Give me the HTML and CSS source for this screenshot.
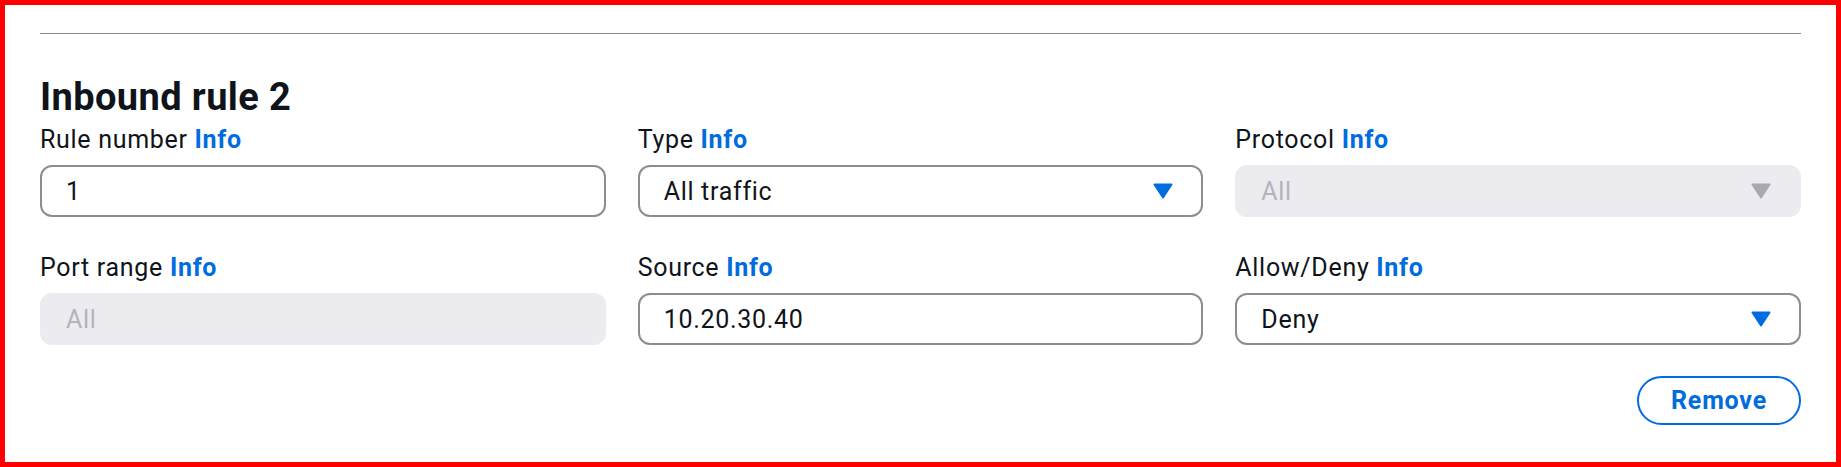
FILE: index.html
```html
<!DOCTYPE html>
<html lang="en">
<head>
<meta charset="utf-8">
<title>Inbound rule 2</title>
<link rel="stylesheet" href="styles.css">
</head>
<body>
<div class="frame">
  <hr class="divider">
  <h2 class="title">Inbound rule 2</h2>
  <div class="grid">
    <div class="field">
      <div class="label">Rule number <a class="info">Info</a></div>
      <div class="control"><span class="value">1</span></div>
    </div>
    <div class="field">
      <div class="label">Type <a class="info">Info</a></div>
      <div class="control select"><span class="value">All traffic</span>
        <svg class="caret" width="20" height="16" viewBox="0 0 20 16"><path d="M1.5 1.5 H18.5 L10 14.5 Z" fill="#006ce0" stroke="#006ce0" stroke-width="2" stroke-linejoin="round"/></svg>
      </div>
    </div>
    <div class="field">
      <div class="label">Protocol <a class="info">Info</a></div>
      <div class="control select disabled"><span class="value">All</span>
        <svg class="caret" width="20" height="16" viewBox="0 0 20 16"><path d="M1.5 1.5 H18.5 L10 14.5 Z" fill="#a8a8b0" stroke="#a8a8b0" stroke-width="2" stroke-linejoin="round"/></svg>
      </div>
    </div>
    <div class="field">
      <div class="label">Port range <a class="info">Info</a></div>
      <div class="control disabled"><span class="value">All</span></div>
    </div>
    <div class="field">
      <div class="label">Source <a class="info">Info</a></div>
      <div class="control"><span class="value">10.20.30.40</span></div>
    </div>
    <div class="field">
      <div class="label">Allow/Deny <a class="info">Info</a></div>
      <div class="control select"><span class="value">Deny</span>
        <svg class="caret" width="20" height="16" viewBox="0 0 20 16"><path d="M1.5 1.5 H18.5 L10 14.5 Z" fill="#006ce0" stroke="#006ce0" stroke-width="2" stroke-linejoin="round"/></svg>
      </div>
    </div>
  </div>
  <div class="actions">
    <button class="remove" type="button">Remove</button>
  </div>
</div>
</body>
</html>
```
FILE: styles.css
```css
* { box-sizing: border-box; }
html, body { margin: 0; padding: 0; background: #ffffff; }
body {
  font-family: Roboto, "Liberation Sans", sans-serif;
  color: #0f141a;
}
.frame {
  width: 1841px;
  height: 467px;
  border: 5px solid #ff0000;
  padding: 28px 35px 0;
  overflow: hidden;
}
.divider {
  margin: 0;
  border: 0;
  height: 1px;
  background: #8c8c94;
}
.title {
  margin: 41px 0 0;
  font-size: 38px;
  line-height: 44px;
  font-weight: 700;
  letter-spacing: 0.4px;
  color: #0f141a;
}
.grid {
  margin-top: 6px;
  display: grid;
  grid-template-columns: repeat(3, 1fr);
  column-gap: 32px;
  row-gap: 36px;
}
.label {
  font-size: 25px;
  line-height: 30px;
  letter-spacing: 0.7px;
  margin-bottom: 10px;
  color: #0f141a;
}
.info {
  color: #006ce0;
  font-weight: 700;
  text-decoration: none;
}
.control {
  height: 52px;
  border: 2px solid #8c8c94;
  border-radius: 12px;
  padding: 2px 28px 0 24px;
  display: flex;
  align-items: center;
  justify-content: space-between;
  font-size: 25px;
  line-height: 30px;
  letter-spacing: 0.7px;
  color: #0f141a;
  background: #ffffff;
}
.control.disabled {
  background: #ebebf0;
  border-color: #ebebf0;
  color: #b4b4bb;
}
.caret { display: block; flex: none; margin-top: -2px; }
.actions {
  display: flex;
  justify-content: flex-end;
  margin-top: 31px;
}
.remove {
  width: 164px;
  height: 49px;
  border: 2px solid #006ce0;
  border-radius: 25px;
  background: #ffffff;
  color: #006ce0;
  font-family: Roboto, "Liberation Sans", sans-serif;
  font-size: 25px;
  font-weight: 700;
  letter-spacing: 0.8px;
  padding: 0;
  line-height: 30px;
}
```
